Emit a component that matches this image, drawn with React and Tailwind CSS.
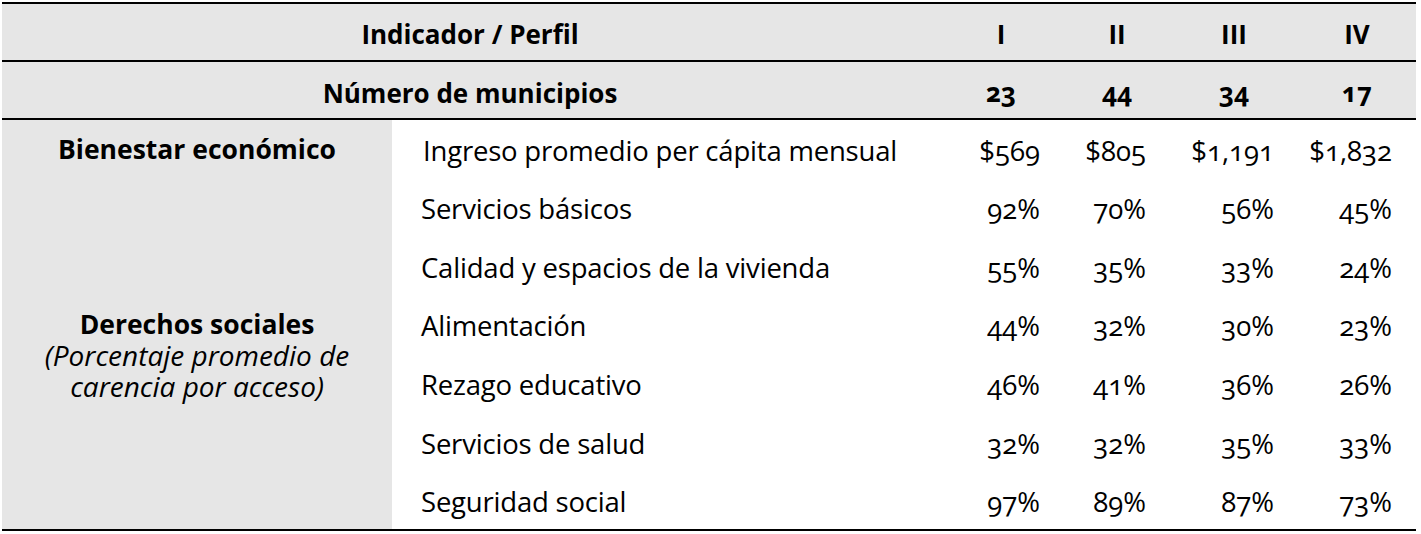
const rows = [
  { name: "Servicios básicos", v: ["92%", "70%", "56%", "45%"] },
  { name: "Calidad y espacios de la vivienda", v: ["55%", "35%", "33%", "24%"] },
  { name: "Alimentación", v: ["44%", "32%", "30%", "23%"] },
  { name: "Rezago educativo", v: ["46%", "41%", "36%", "26%"] },
  { name: "Servicios de salud", v: ["32%", "32%", "35%", "33%"] },
  { name: "Seguridad social", v: ["97%", "89%", "87%", "73%"] },
];

export default function App() {
  return (
    <div className="w-[1421px] h-[534px] bg-white pt-[2px] pl-[2px] font-['Open_Sans',sans-serif] text-[27.5px] text-black oldstyle-nums">
      <table className="table-fixed w-[1414px] border-collapse">
        <colgroup>
          <col className="w-[390px]" />
          <col className="w-[546px]" />
          <col className="w-[126px]" />
          <col className="w-[106px]" />
          <col className="w-[128px]" />
          <col className="w-[118px]" />
        </colgroup>
        <thead className="text-[26px]">
          <tr className="h-[58px] bg-[#e6e6e6] border-t-2 border-b-2 border-black font-bold">
            <th colSpan={2} className="text-center pt-[5px]">Indicador / Perfil</th>
            <th className="pt-[5px]">I</th>
            <th className="pt-[5px]">II</th>
            <th className="pt-[5px]">III</th>
            <th className="pt-[5px]">IV</th>
          </tr>
          <tr className="h-[58px] bg-[#e6e6e6] border-b-2 border-black font-bold">
            <th colSpan={2} className="text-center pt-[6px]">Número de municipios</th>
            <th className="pt-[5px]">23</th>
            <th className="pt-[5px]">44</th>
            <th className="pt-[5px]">34</th>
            <th className="pt-[5px]">17</th>
          </tr>
        </thead>
        <tbody className="border-b-2 border-black">
          <tr className="h-[58.7px]">
            <td className="bg-[#e6e6e6] text-center font-bold text-[26.5px] pt-[3px]">Bienestar económico</td>
            <td className="pl-[31px] pt-[4px] tracking-[-0.2px]">Ingreso promedio per cápita mensual</td>
            <td className="text-right pr-[24px] pt-[4px]">$569</td>
            <td className="text-right pr-[24px] pt-[4px]">$805</td>
            <td className="text-right pr-[24px] pt-[4px]">$1,191</td>
            <td className="text-right pr-[24px] pt-[4px]">$1,832</td>
          </tr>
          {rows.map((r, i) => (
            <tr key={r.name} className="h-[58.7px]">
              {i === 0 && (
                <td rowSpan={6} className="bg-[#e6e6e6] text-center align-middle leading-[31px] pt-[4px]">
                  <div className="font-bold text-[26.5px]">Derechos sociales</div>
                  <div className="italic text-[28px]">(Porcentaje promedio de</div>
                  <div className="italic text-[28px]">carencia por acceso)</div>
                </td>
              )}
              <td className="pl-[29px] pt-[3px] tracking-[-0.2px]">{r.name}</td>
              {r.v.map((x, j) => (
                <td key={j} className="text-right pr-[24px] pt-[3px]">{x}</td>
              ))}
            </tr>
          ))}
        </tbody>
      </table>
    </div>
  );
}
